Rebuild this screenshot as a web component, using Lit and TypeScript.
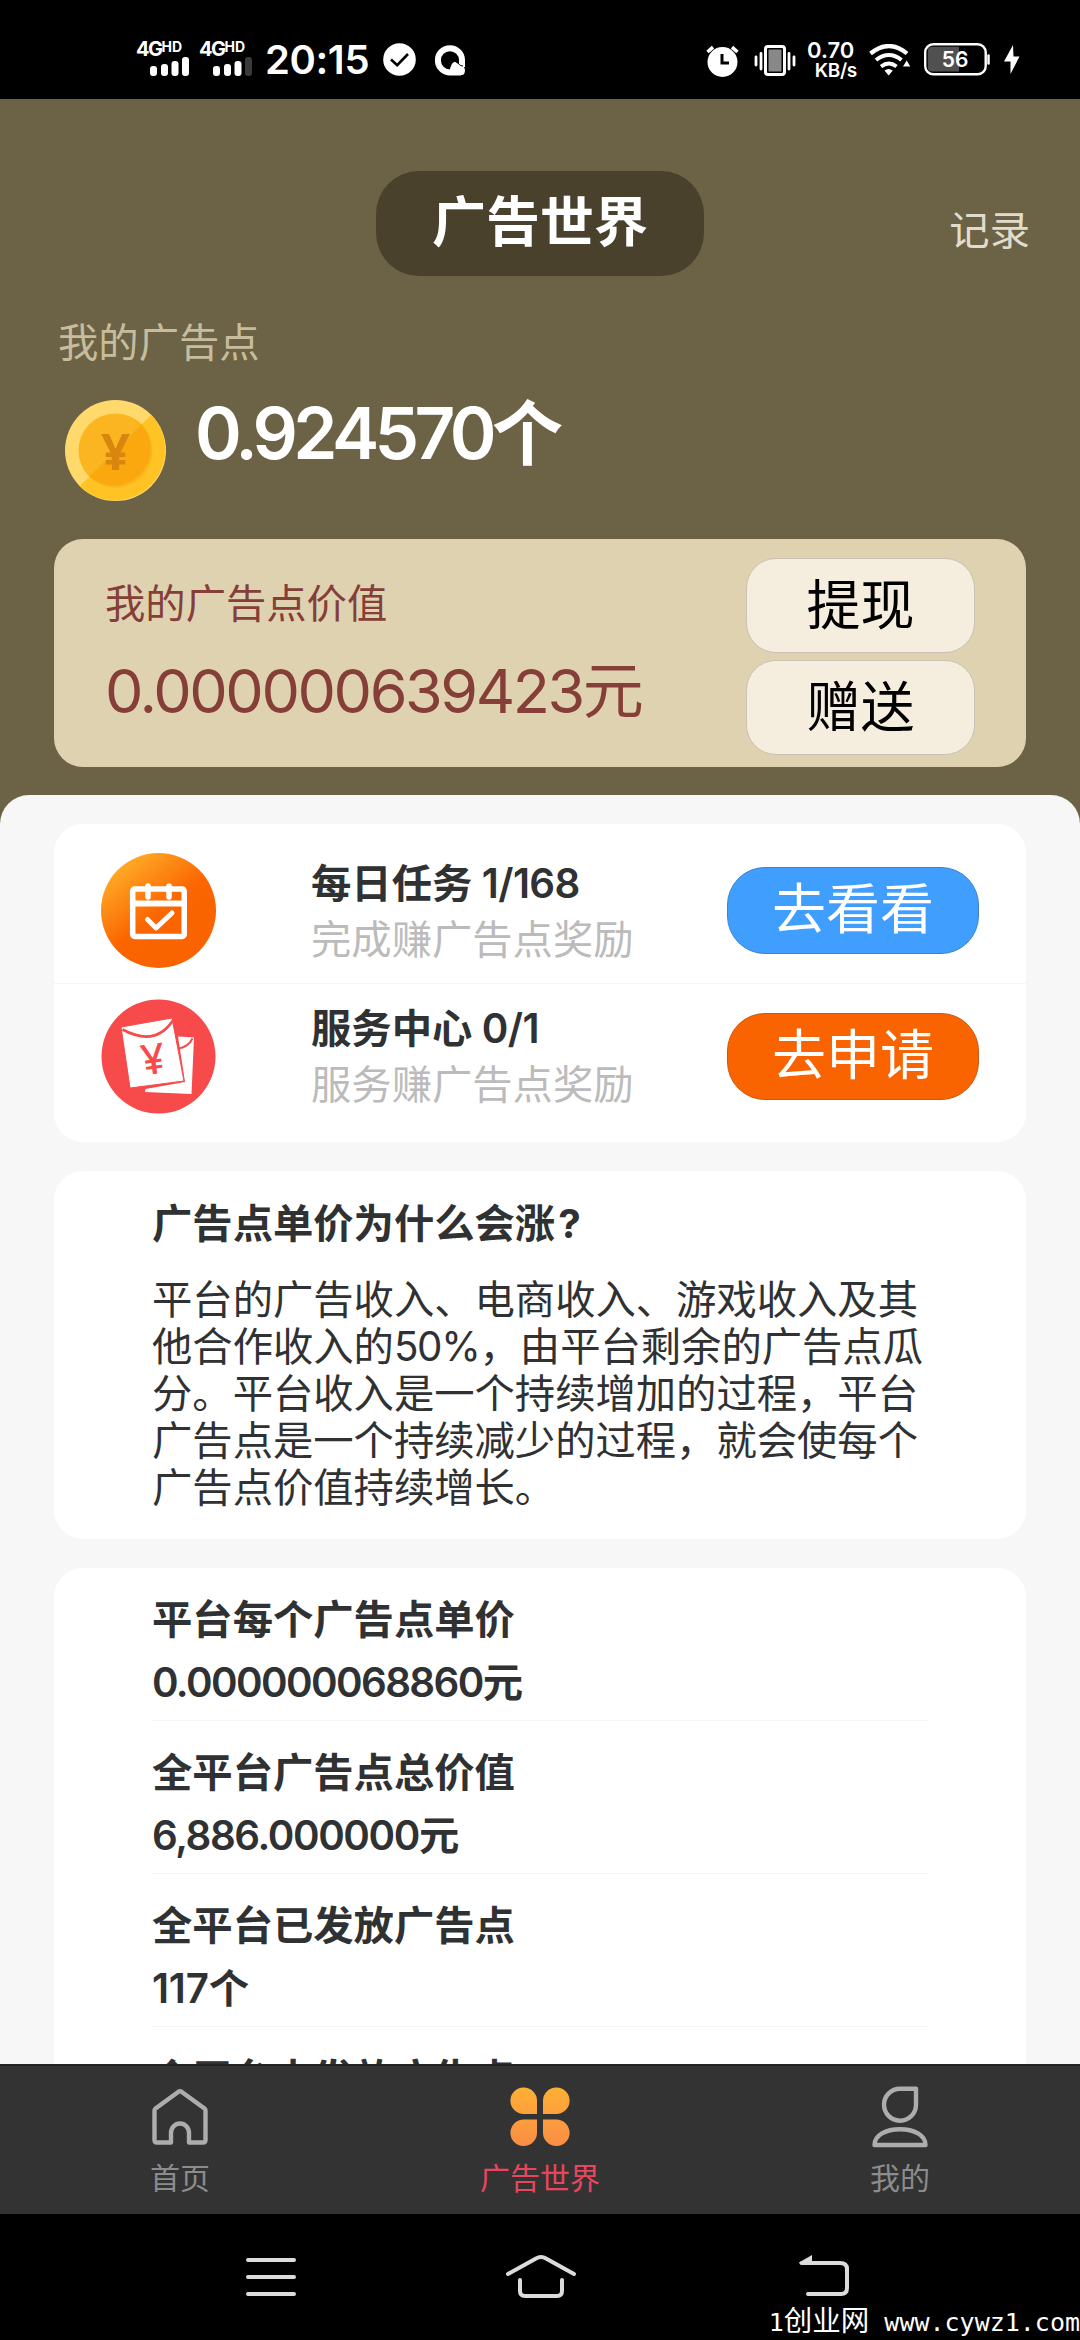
import { LitElement, html, svg, css } from "lit";
import { customElement } from "lit/decorators.js";

const signalBars = (lastDim: boolean) => svg`
  <rect x="0" y="9" width="7" height="10" rx="3" fill="#fff"></rect>
  <rect x="11" y="7" width="7" height="12" rx="3" fill="#fff"></rect>
  <rect x="21.5" y="4" width="7" height="15" rx="3" fill="#fff"></rect>
  <rect x="32" y="0" width="7" height="19" rx="3" fill=${lastDim ? "#3a3a3a" : "#fff"}></rect>`;

@customElement("status-bar")
export class StatusBar extends LitElement {
  static styles = css`
    :host {
      display: flex;
      align-items: flex-start;
      height: 99px;
      background: #000;
      color: #fff;
      box-sizing: border-box;
      padding: 36px 0 0 136px;
      font-family: Inter, "Noto Sans CJK SC", sans-serif;
    }
    svg { display: block; flex: none; }
    .sim { width: 53px; margin-right: 10px; flex: none; padding-top: 5px; }
    .net { display: flex; align-items: flex-start; height: 17px; font-weight: 700; }
    .g { font-size: 20px; line-height: 17px; letter-spacing: -1.5px; }
    .hd { font-size: 14px; line-height: 11px; letter-spacing: 0; }
    .sim svg { margin: -1px 0 0 14px; }
    .time { font-size: 40px; line-height: 46px; font-weight: 600; width: 121px; margin-left: 3px; margin-top: 1px; letter-spacing: -0.4px; white-space: nowrap; }
    .check { margin: 7px 0 0 -3px; }
    .q { margin: 9px 0 0 19px; }
    .right { display: flex; align-items: flex-start; margin-left: auto; width: 374px; }
    .alarm { margin-top: 9px; }
    .vib { margin: 8px 0 0 15px; }
    .speed { margin: 4px 0 0 11px; width: 50px; font-weight: 600; text-align: right; white-space: nowrap; flex: none; }
    .n { font-size: 22px; line-height: 21px; text-align: left; letter-spacing: 0; }
    .u { font-size: 19px; line-height: 20px; letter-spacing: -0.3px; }
    .wifi { margin: 8px 0 0 12px; }
    .batt { margin: 7px 0 0 13px; width: 66px; height: 33px; position: relative; flex: none; }
    .pct { position: absolute; left: 0; top: 0; width: 62px; text-align: center; font-size: 21px; line-height: 33px; font-weight: 600; }
    .bolt { margin: 8px 0 0 14px; }
  `;
  render() {
    return html`
      <div class="sim">
        <div class="net"><span class="g">4G</span><span class="hd">HD</span></div>
        <svg width="39" height="19">${signalBars(false)}</svg>
      </div>
      <div class="sim">
        <div class="net"><span class="g">4G</span><span class="hd">HD</span></div>
        <svg width="39" height="19">${signalBars(true)}</svg>
      </div>
      <div class="time">20:15</div>
      <svg class="check" width="33" height="33" viewBox="0 0 33 33">
        <circle cx="16.5" cy="16.5" r="16.3" fill="#fff"></circle>
        <path d="M8 16.5 L14.2 22.2 L25 11" fill="none" stroke="#000" stroke-width="2.6"></path>
      </svg>
      <svg class="q" width="31" height="31" viewBox="0 0 31 31">
        <path d="M15 3.2 A12 12 0 1 0 15 27.4 H26" fill="none" stroke="#fff" stroke-width="6"></path>
        <path d="M15 3.2 A12 12 0 0 1 27 15 V22" fill="none" stroke="#fff" stroke-width="6"></path>
        <path d="M14 30 C15 21 17 17 20 17 C24 17 24 22 27 21.5 C31 21 31 30 27 30 Z" fill="#fff"></path>
        <path d="M21 17 C24 18 24 21 28 21" fill="none" stroke="#000" stroke-width="1"></path>
      </svg>
      <div class="right">
        <svg class="alarm" width="33" height="33" viewBox="0 0 33 33">
          <circle cx="16.5" cy="17" r="15" fill="#fff"></circle>
          <path d="M1.5 7 L7 2.2 M31.500 7 L26 2.2" stroke="#fff" stroke-width="3.600"></path>
          <path d="M16 9 V18 H23" fill="none" stroke="#000" stroke-width="3"></path>
        </svg>
        <svg class="vib" width="42" height="33" viewBox="0 0 42 33">
          <rect x="11.500" y="2.500" width="19" height="28" rx="2.500" fill="#000" stroke="#fff" stroke-width="3"></rect>
          <rect x="14.500" y="5.500" width="13" height="22" fill="#888"></rect>
          <path d="M2 13 V21 M7 9.500 V25 M35 9.500 V25 M40 13 V21" stroke="#fff" stroke-width="2.800" stroke-linecap="round"></path>
        </svg>
        <div class="speed"><div class="n">0.70</div><div class="u">KB/s</div></div>
        <svg class="wifi" width="42" height="32" viewBox="0 0 42 32">
          <path d="M1.500 9.500 Q20 -5.500 38 9.500" fill="none" stroke="#fff" stroke-width="4.200"></path>
          <path d="M7 16 Q20 6 32.500 16" fill="none" stroke="#fff" stroke-width="4"></path>
          <path d="M12 22.500 Q20 16.500 27.500 22.500" fill="none" stroke="#fff" stroke-width="3.800"></path>
          <path d="M15.500 26.500 Q19.500 23.500 23.800 26.500 L19.700 31.500 Z" fill="#fff"></path>
          <path d="M34 22.500 L37.700 16.500 L41.300 22.500 Z" fill="#fff"></path>
        </svg>
        <div class="batt">
          <svg width="66" height="33" viewBox="0 0 66 33">
            <rect x="1.200" y="1.200" width="60.500" height="30" rx="8" fill="none" stroke="#fff" stroke-width="2.400"></rect>
            <path d="M8 3.800 H35 V28.500 H8 Q3.800 28.500 3.800 24.500 V8 Q3.800 3.800 8 3.800" fill="#505050"></path>
            <path d="M64.500 12.500 V20.500" stroke="#fff" stroke-width="2.500" stroke-linecap="round"></path>
          </svg>
          <div class="pct">56</div>
        </div>
        <svg class="bolt" width="16" height="31" viewBox="0 0 16 31">
          <path d="M9 1 L0 17.500 H6.500 V30 L15.500 12.500 H9.500 Z" fill="#fff"></path>
        </svg>
      </div>
    `;
  }
}

@customElement("ad-header")
export class AdHeader extends LitElement {
  static styles = css`
    :host {
      display: block;
      box-sizing: border-box;
      height: 696px;
      padding: 72px 54px 0;
      background: #6c6346;
    }
    .nav { display: grid; grid-template-columns: 1fr 328px 1fr; grid-template-rows: 105px; }
    .title {
      grid-column: 2;
      background: #4a412d;
      border-radius: 43px;
      color: #fff;
      font-weight: 700;
      font-size: 54px;
      line-height: 103px;
      text-align: center;
    }
    .log { justify-self: end; font-size: 40.32px; line-height: 119px; color: #e1dccd; margin-right: -4px; }
    .label { margin: 38px 0 0 4px; font-size: 40.32px; line-height: 57px; color: #c7bc9b; }
    .points { display: flex; gap: 29px; margin: 29px 0 0 11px; height: 101px; }
    .coin { display: block; width: 101px; height: 101px; }
    .amount { color: #fff; font-size: 71px; line-height: 66px; font-weight: 600; letter-spacing: -4.6px; white-space: nowrap; }
    .value {
      display: flex;
      justify-content: space-between;
      box-sizing: border-box;
      height: 228px;
      margin-top: 38px;
      padding: 19px 51px 0 51px;
      border-radius: 29px;
      background: #dfd2b1;
      color: #863f38;
    }
    .name { font-size: 40.32px; line-height: 58px; margin-top: 17px; }
    .money { font-size: 61px; line-height: 80px; margin-top: 18px; letter-spacing: -2.4px; white-space: nowrap; }
    .actions { display: flex; flex-direction: column; gap: 7px; width: 229px; flex: none; }
    .btn {
      box-sizing: border-box;
      height: 95px;
      border: 1px solid #c9c2b4;
      border-radius: 30px;
      background: #f5eddd;
      color: #000;
      font-size: 54px;
      line-height: 93px;
      text-align: center;
    }
    .yen { font: 700 51px "Noto Sans", sans-serif; fill: #d9860e; }
  `;
  render() {
    return html`
      <div class="nav"><div class="title">广告世界</div><div class="log">记录</div></div>
      <div class="label">我的广告点</div>
      <div class="points">
        <svg class="coin" viewBox="0 0 101 101">
          <circle cx="50.500" cy="50.500" r="50.500" fill="#ffd96c"></circle>
          <path d="M86.200 14.800 A50.500 50.500 0 0 1 14.800 86.200 Z" fill="#ffc423"></path>
          <circle cx="50.500" cy="50.500" r="37" fill="#fbb520"></circle>
          <path d="M76.600 24.400 A37 37 0 0 1 24.400 76.600 Z" fill="#fba80f"></path>
          <text class="yen" x="50.500" y="70" text-anchor="middle">¥</text>
        </svg>
        <div class="amount">0.924570个</div>
      </div>
      <div class="value">
        <div>
          <div class="name">我的广告点价值</div>
          <div class="money">0.000000639423元</div>
        </div>
        <div class="actions">
          <div class="btn">提现</div>
          <div class="btn">赠送</div>
        </div>
      </div>
    `;
  }
}

const taskIcon = html`<svg viewBox="0 0 115 115">
  <defs>
    <linearGradient id="g" x1="0.100" y1="0.050" x2="0.600" y2="0.700">
      <stop offset="0" stop-color="#ffb62c"></stop>
      <stop offset="0.750" stop-color="#fb6602"></stop>
      <stop offset="1" stop-color="#fa6400"></stop>
    </linearGradient>
  </defs>
  <circle cx="57.500" cy="57.500" r="57.500" fill="url(#g)"></circle>
  <g fill="none" stroke="#fff" stroke-linecap="round" stroke-linejoin="round">
    <rect x="31.700" y="36" width="51.500" height="47.500" rx="2" stroke-width="5.500"></rect>
    <path d="M32 50.500 H83" stroke-width="6"></path>
    <path d="M47 33 V44 M68 33 V44" stroke-width="5.500"></path>
    <path d="M46.500 66.500 L55 75 L71 60" stroke-width="5"></path>
  </g>
</svg>`;

const serviceIcon = html`<svg viewBox="0 0 115 115">
  <circle cx="57.500" cy="57.500" r="57" fill="#f74a4a"></circle>
  <path d="M77 37.500 L93 38.500 L90.500 95 L44 93 L44.500 90 L84 83 Z" fill="#fff"></path>
  <path d="M78 49.500 Q87 48 91.500 39.500" fill="none" stroke="#f74a4a" stroke-width="2"></path>
  <path d="M20 28 L71 19 L83 82 L29 89 Z" fill="#fff" stroke="#f74a4a" stroke-width="1"></path>
  <path d="M21.500 30.500 Q54 48 71.500 22" fill="none" stroke="#f74a4a" stroke-width="2.600"></path>
  <text class="yen" x="52" y="75" text-anchor="middle" transform="rotate(-8 52 60)">¥</text>
</svg>`;

@customElement("ad-content")
export class AdContent extends LitElement {
  static styles = css`
    :host {
      display: block;
      height: 1269px;
      overflow: hidden;
      background: #6c6346;
      color: #303133;
    }
    .sheet {
      display: flex;
      flex-direction: column;
      gap: 29px;
      box-sizing: border-box;
      min-height: 1269px;
      padding: 29px 54px 0;
      border-radius: 29px 29px 0 0;
      background: #f7f7f7;
    }
    .card { box-sizing: border-box; background: #fff; border-radius: 29px; }
    .tasks { height: 318px; }
    .task { display: flex; box-sizing: border-box; height: 158px; padding-top: 15px; }
    .first { padding-top: 0; height: 160px; border-bottom: 1px solid #f5f5f5; }
    .icon { width: 115px; height: 115px; margin-left: 47px; flex: none; }
    .icon svg { display: block; }
    .first .icon { margin-top: 29px; }
    .info { margin-left: 95px; width: 416px; flex: none; }
    .first .info { margin-top: 30px; }
    .name { font-size: 40.32px; line-height: 59px; font-weight: 700; white-space: nowrap; }
    .num { font-weight: 600; letter-spacing: -0.6px; }
    .desc { font-size: 40.32px; line-height: 53px; color: #bbb; white-space: nowrap; }
    .go {
      box-sizing: border-box;
      width: 252px;
      height: 87px;
      margin-top: 14px;
      border-radius: 38px;
      border: 1px solid;
      color: #fff;
      font-size: 54px;
      line-height: 83px;
      text-align: center;
      flex: none;
    }
    .first .go { margin-top: 43px; }
    .blue { background: #409eff; border-color: #3b84cc; }
    .orange { background: #fa6400; border-color: #c65a10; }
    .yen { font: 500 42px "Noto Sans", sans-serif; fill: #f74a4a; }
    .why { height: 368px; padding: 23px 0 0 98px; }
    .q { font-size: 40.32px; line-height: 59px; font-weight: 700; }
    .mark { margin-left: 3px; }
    .a { margin-top: 23px; font-size: 40.32px; line-height: 47px; white-space: nowrap; }
    .tight { letter-spacing: -1.3px; }
    .stats { height: 640px; padding: 0 98px; flex: none; }
    .stat { box-sizing: border-box; height: 153px; padding-top: 20px; border-bottom: 1px solid #f5f5f5; font-size: 40.32px; line-height: 63px; font-weight: 700; }
    .v { font-weight: 600; letter-spacing: -1.6px; }
    .mid { letter-spacing: -1.4px; }
    .short { letter-spacing: -0.2px; }
  `;
  private lines = [
    html`平台的广告收入、电商收入、游戏收入及其`,
    html`他合作收入的<span class="tight">50%</span>，由平台剩余的广告点瓜`,
    html`分。平台收入是一个持续增加的过程，平台`,
    html`广告点是一个持续减少的过程，就会使每个`,
    html`广告点价值持续增长。`,
  ];
  private stats = [
    ["平台每个广告点单价", "0.000000068860元", "v"],
    ["全平台广告点总价值", "6,886.000000元", "v mid"],
    ["全平台已发放广告点", "117个", "v short"],
    ["全平台未发放广告点", "", "v"],
  ];
  render() {
    return html`
      <div class="sheet">
        <div class="card tasks">
          <div class="task first">
            <div class="icon">${taskIcon}</div>
            <div class="info">
              <div class="name">每日任务 <span class="num">1/168</span></div>
              <div class="desc">完成赚广告点奖励</div>
            </div>
            <div class="go blue">去看看</div>
          </div>
          <div class="task">
            <div class="icon">${serviceIcon}</div>
            <div class="info">
              <div class="name">服务中心 <span class="num">0/1</span></div>
              <div class="desc">服务赚广告点奖励</div>
            </div>
            <div class="go orange">去申请</div>
          </div>
        </div>
        <div class="card why">
          <div class="q">广告点单价为什么会涨<span class="mark">?</span></div>
          <div class="a">${this.lines.map((l) => html`<div>${l}</div>`)}</div>
        </div>
        <div class="card stats">
          ${this.stats.map(([n, v, c]) => html`<div class="stat"><div>${n}</div><div class=${c}>${v}</div></div>`)}
        </div>
      </div>
    `;
  }
}

@customElement("tab-bar")
export class TabBar extends LitElement {
  static styles = css`
    :host {
      display: grid;
      grid-template-columns: repeat(3, 1fr);
      box-sizing: border-box;
      height: 150px;
      border-top: 2px solid #222;
      background: #333;
      color: #8c8c8c;
    }
    .tab { display: flex; flex-direction: column; align-items: center; padding-top: 17px; font-size: 30px; line-height: 40px; }
    svg { display: block; width: 70px; height: 70px; margin-bottom: 5px; }
    .on { color: #e8465f; }
  `;
  render() {
    return html`
      <div class="tab">
        <svg viewBox="0 0 70 70" fill="none" stroke="#adadad" stroke-width="4.400" stroke-linejoin="round">
          <path d="M36.500 8.700 L59.500 25.500 Q60.500 26.200 60.500 27.500 V57 Q60.500 59.500 58 59.500 H44 V50 A9 9.500 0 0 0 26 50 V59.500 H12 Q9.500 59.500 9.500 57 V27.500 Q9.500 26.200 10.500 25.500 L33.500 8.700 Q35 7.700 36.500 8.700 Z"></path>
        </svg>
        <div>首页</div>
      </div>
      <div class="tab on">
        <svg viewBox="0 0 70 70">
          <defs>
            <linearGradient id="f" gradientUnits="userSpaceOnUse" x1="0" y1="4" x2="0" y2="64">
              <stop offset="0" stop-color="#fdb034"></stop>
              <stop offset="1" stop-color="#fa8d46"></stop>
            </linearGradient>
          </defs>
          <path fill="url(#f)" d="M32 31 H19 A13.300 13.300 0 1 1 32 17.500 Z M38 31 V17.500 A13.300 13.300 0 1 1 51 31 Z M32 36.500 V50 A13.300 13.300 0 1 1 19 36.500 Z M38 36.500 H51 A13.300 13.300 0 1 1 38 50 Z"></path>
        </svg>
        <div>广告世界</div>
      </div>
      <div class="tab">
        <svg viewBox="0 0 70 70" fill="none" stroke="#adadad" stroke-width="4.400" stroke-linejoin="round">
          <path d="M51 5.700 V22 A16 16 0 1 1 35 5.700 Z"></path>
          <path d="M9.500 62 C9.500 52 21 46.200 35 46.200 C49 46.200 60.500 52 60.500 62 Z"></path>
        </svg>
        <div>我的</div>
      </div>
    `;
  }
}

@customElement("system-nav")
export class SystemNav extends LitElement {
  static styles = css`
    :host {
      display: flex;
      align-items: flex-start;
      box-sizing: border-box;
      height: 126px;
      padding: 38px 0 0 244px;
      background: #000;
      position: relative;
    }
    svg { display: block; flex: none; }
    .home { margin-left: 206px; }
    .back { margin-left: 218px; }
    .mark {
      position: absolute;
      right: 0;
      bottom: 0;
      display: flex;
      align-items: baseline;
      height: 36px;
      color: #fff;
      white-space: pre;
      font-family: "DejaVu Sans Mono", monospace;
      font-size: 25px;
      line-height: 36px;
    }
    .cn { font-size: 28.500px; line-height: 30px; font-family: "Noto Sans CJK SC", sans-serif; }
  `;
  render() {
    return html`
      <svg width="54" height="48" viewBox="0 0 54 48" stroke="#dcdcdc" stroke-width="4" stroke-linecap="round">
        <path d="M4 8 H50 M4 25 H50 M4 42 H50"></path>
      </svg>
      <svg class="home" width="74" height="48" viewBox="0 0 74 48" fill="none" stroke="#dcdcdc" stroke-width="4" stroke-linecap="round">
        <path d="M4 22 L32 6.500 Q37 3.500 42 6.500 L70 22"></path>
        <path d="M16 28 V39 Q16 44 21 44 H53 Q58 44 58 39 V28"></path>
      </svg>
      <svg class="back" width="56" height="48" viewBox="0 0 56 48" fill="none" stroke="#dcdcdc" stroke-width="4" stroke-linecap="round">
        <path d="M6 11 H44 Q51 11 51 17 V36 Q51 42 45 42 H12"></path>
        <path d="M3 10.500 L16 3 V12.500 H4 Z" fill="#dcdcdc" stroke="none"></path>
      </svg>
      <div class="mark"><span>1</span><span class="cn">创业网</span><span> www.cywz1.com</span></div>
    `;
  }
}

@customElement("app-root")
export class AppRoot extends LitElement {
  static styles = css`
    :host {
      display: flex;
      flex-direction: column;
      width: 1080px;
      height: 2340px;
      overflow: hidden;
      background: #000;
      font-family: Inter, "Noto Sans CJK SC", sans-serif;
    }
  `;
  render() {
    return html`
      <status-bar></status-bar>
      <ad-header></ad-header>
      <ad-content></ad-content>
      <tab-bar></tab-bar>
      <system-nav></system-nav>
    `;
  }
}
